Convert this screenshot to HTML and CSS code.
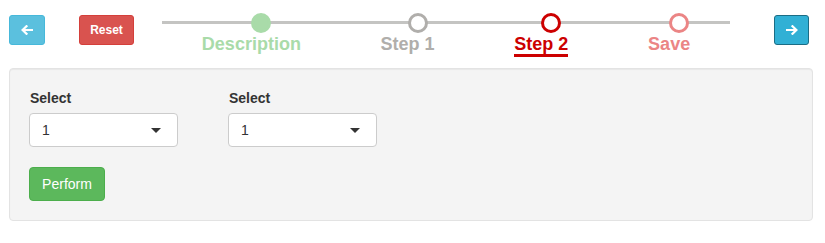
FILE: index.html
```html
<!DOCTYPE html>
<html>
<head>
<meta charset="utf-8">
<link rel="stylesheet" href="styles.css">
</head>
<body>
<div class="top">
  <button class="btn btn-info btn-prev" aria-label="Previous">
    <svg width="12" height="10" viewBox="0 0 12 10"><path d="M11 5H2.5M5.5 1.2L1.6 5l3.9 3.8" fill="none" stroke="#fff" stroke-width="2.2" stroke-linecap="square"/></svg>
  </button>
  <button class="btn btn-danger btn-reset">Reset</button>
  <div class="stepper">
    <div class="track"></div>
    <div class="step done"><div class="dot"></div><div class="label">Description</div></div>
    <div class="step todo"><div class="dot"></div><div class="label">Step 1</div></div>
    <div class="step current"><div class="dot"></div><div class="label"><span class="ul">Step 2</span></div></div>
    <div class="step save"><div class="dot"></div><div class="label">Save</div></div>
  </div>
  <button class="btn btn-info-active btn-next" aria-label="Next">
    <svg width="12" height="10" viewBox="0 0 12 10"><path d="M1 5h8.5M6.5 1.2L10.4 5 6.5 8.8" fill="none" stroke="#fff" stroke-width="2.2" stroke-linecap="square"/></svg>
  </button>
</div>
<div class="well">
  <div class="fields">
    <div class="field">
      <div class="field-label">Select</div>
      <div class="select"><span>1</span><span class="caret"></span></div>
    </div>
    <div class="field">
      <div class="field-label">Select</div>
      <div class="select"><span>1</span><span class="caret"></span></div>
    </div>
  </div>
  <button class="btn btn-success btn-perform">Perform</button>
</div>
</body>
</html>
```
FILE: styles.css
```css
html, body {
  margin: 0;
  padding: 0;
  background: #fff;
  font-family: "Liberation Sans", Arial, sans-serif;
  color: #333;
}

.top {
  display: flex;
  align-items: flex-start;
  height: 68px;
  box-sizing: border-box;
  padding: 13px 0 0 9px;
}

.btn {
  box-sizing: border-box;
  border: 1px solid transparent;
  border-radius: 3px;
  font-family: "Liberation Sans", Arial, sans-serif;
  color: #fff;
  cursor: pointer;
  display: inline-flex;
  align-items: center;
  justify-content: center;
  padding: 0;
}

.btn-info {
  background: #5bc0de;
  border-color: #46b8da;
}

.btn-info-active {
  background: #31b0d5;
  border-color: #1b6d85;
}

.btn-danger {
  background: #d9534f;
  border-color: #d43f3a;
}

.btn-success {
  background: #5cb85c;
  border-color: #4cae4c;
}

.btn-prev {
  margin-top: 2px;
  width: 36px;
  height: 30px;
}

.btn-next {
  margin-top: 2px;
  margin-left: 44px;
  width: 35px;
  height: 30px;
}

.btn-reset {
  margin-top: 2px;
  margin-left: 34px;
  width: 55px;
  height: 30px;
  font-size: 12px;
  font-weight: bold;
}

.stepper {
  position: relative;
  display: flex;
  margin-left: 28px;
  width: 568px;
}

.track {
  position: absolute;
  left: 0;
  right: 0;
  top: 8px;
  height: 3px;
  background: #c4c4c2;
}

.step {
  flex: 1 1 auto;
  text-align: center;
}

.dot {
  position: relative;
  z-index: 1;
  box-sizing: border-box;
  width: 20px;
  height: 20px;
  margin-left: 50%;
  border-radius: 50%;
  border: 3px solid #aaa;
  background: #fff;
}

.label {
  margin-top: 1px;
  font-size: 18px;
  font-weight: bold;
  line-height: 21px;
  white-space: nowrap;
}

.done .dot {
  background: #a9dba9;
  border-color: #a9dba9;
}
.done .label { color: #a9dba9; }

.todo .dot { border-color: #b0aeab; }
.todo .label { color: #b0aeab; }

.current .dot { border-color: #cc0000; }
.current .label { color: #cc0000; }

.ul {
  border-bottom: 3px solid #cc0000;
}

.save .dot { border-color: #eb8585; }
.save .label { color: #eb8585; }

.well {
  margin: 0 12px 0 9px;
  height: 153px;
  box-sizing: border-box;
  padding: 19px 19px 18px;
  background: #f4f4f4;
  border: 1px solid #e3e3e3;
  border-radius: 4px;
  box-shadow: inset 0 1px 1px rgba(0, 0, 0, 0.05);
}

.fields {
  display: flex;
  gap: 50px;
}

.field-label {
  font-size: 14px;
  font-weight: bold;
  line-height: 20px;
  margin-bottom: 5px;
  padding-left: 1px;
  color: #333;
}

.select {
  box-sizing: border-box;
  width: 149px;
  height: 34px;
  display: flex;
  align-items: center;
  justify-content: space-between;
  padding: 0 16px 0 12px;
  background: #fff;
  border: 1px solid #ccc;
  border-radius: 4px;
  font-size: 14px;
  color: #333;
}

.caret {
  width: 0;
  height: 0;
  border-left: 5px solid transparent;
  border-right: 5px solid transparent;
  border-top: 5px solid #333;
  margin-top: 1px;
}

.btn-perform {
  margin-top: 20px;
  width: 76px;
  height: 34px;
  font-size: 14px;
  border-radius: 4px;
}
```
